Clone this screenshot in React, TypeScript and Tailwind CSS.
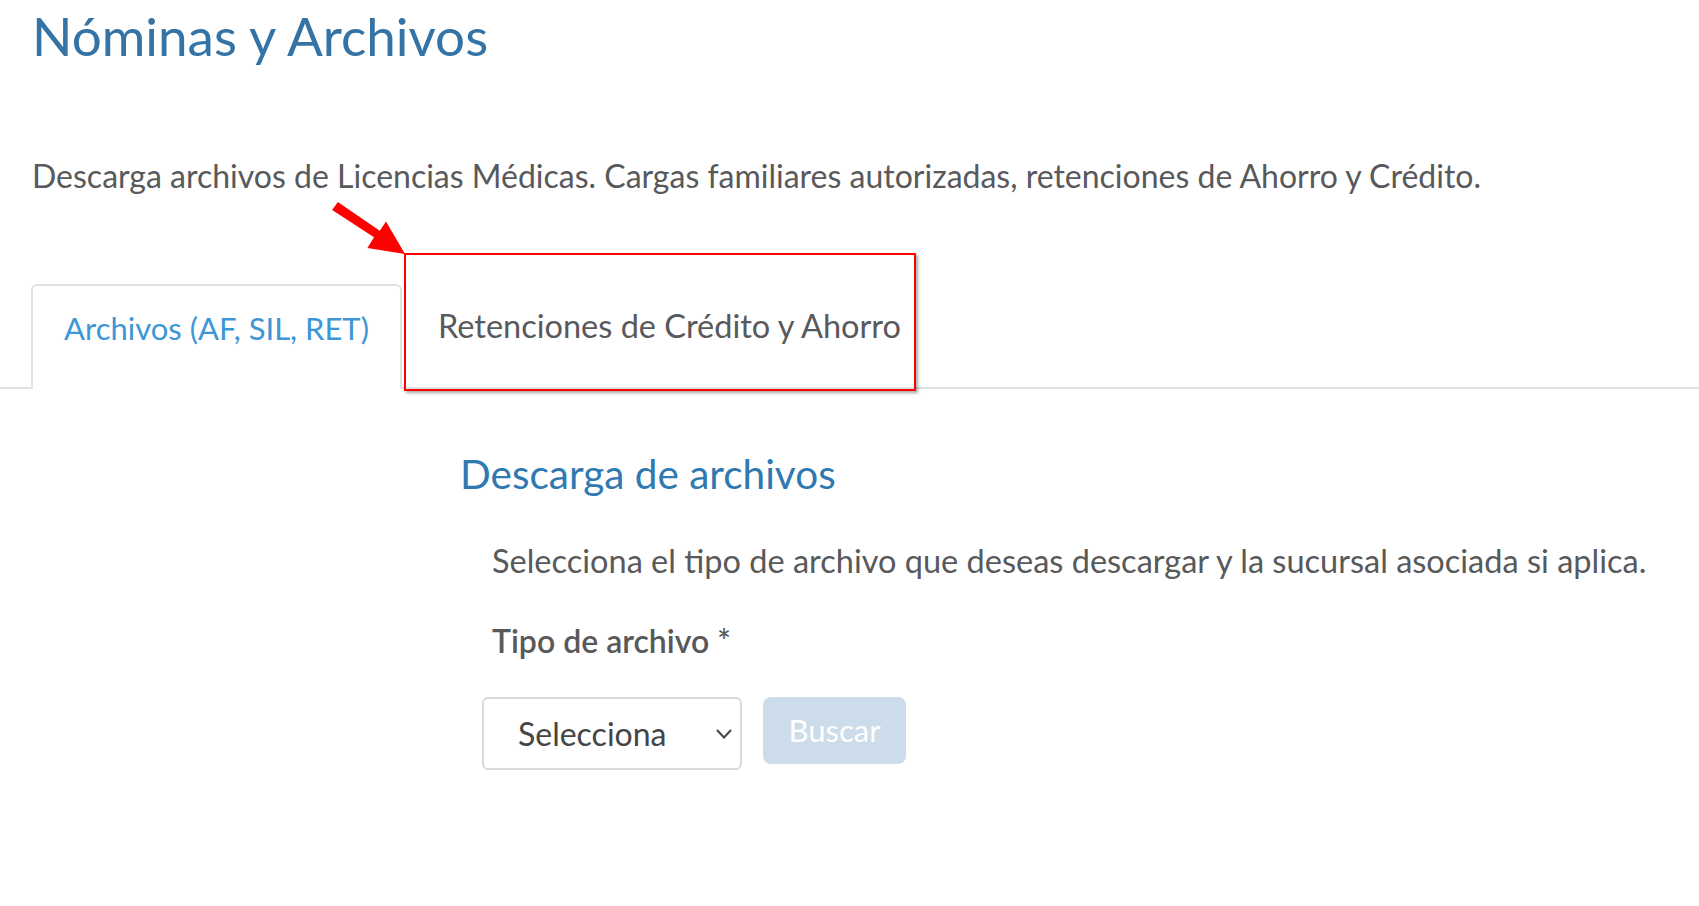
import React from "react";

export default function App() {
  const font = { fontFamily: "Lato, 'Noto Sans', sans-serif" };
  return (
    <div className="relative min-h-[906px] w-full bg-white text-[#58595b]" style={font}>
      <div className="pl-[32px] pt-[2px]">
        <h1 className="text-[53px] leading-[68px] text-[#3473a6]">Nóminas y Archivos</h1>
        <p className="mt-[86px] text-[32px] leading-[40px] text-[#58595b]">
          Descarga archivos de Licencias Médicas. Cargas familiares autorizadas, retenciones de Ahorro y Crédito.
        </p>
      </div>

      <div className="relative mt-[88px] flex items-end border-b-2 border-[#dee2e6] pl-[31px]">
        <div className="-mb-[2px] flex h-[105px] w-[371px] items-center justify-center rounded-t-[6px] border-2 border-b-0 border-[#dee2e6] bg-white pb-[18px] text-[31px] text-[#3d96d6]">
          Archivos (AF, SIL, RET)
        </div>
        <div className="flex h-[103px] items-center pb-[18px] pl-[36px] text-[32.5px] text-[#58595b]">
          Retenciones de Crédito y Ahorro
        </div>
        <div className="pointer-events-none absolute left-[404px] top-[-31px] h-[138px] w-[512px] border-2 border-[#ff0000] shadow-[2px_2px_3px_rgba(0,0,0,0.35)]" />
        <svg className="pointer-events-none absolute left-[330px] top-[-85px]" width="80" height="60" viewBox="0 0 80 60">
          <polygon points="7.8,2.9 49.8,31.7 56,22.6 75,55 37.4,49 44,38.3 2.2,11.1" fill="#ff0000" />
        </svg>
      </div>

      <div className="pl-[460px] pt-[60px]">
        <h2 className="text-[40.5px] leading-[50px] text-[#2f79b0]">Descarga de archivos</h2>
        <div className="pl-[32px]">
          <p className="mt-[42px] text-[32.5px] leading-[40px]">
            Selecciona el tipo de archivo que deseas descargar y la sucursal asociada si aplica.
          </p>
          <p className="mt-[40px] text-[32px] font-semibold leading-[40px]">Tipo de archivo *</p>
        </div>
        <div className="mt-[36px] flex items-start gap-[21px] pl-[22px]">
          <div className="relative flex h-[73px] w-[260px] items-center rounded-[6px] border-2 border-[#d6d9dd] bg-white pl-[34px] text-[32px] text-[#454545]">
            Selecciona
            <svg className="absolute right-[7px] top-[29px]" width="18" height="12" viewBox="0 0 18 12">
              <polyline points="2,2 9,9.5 16,2" fill="none" stroke="#454545" strokeWidth="2" />
            </svg>
          </div>
          <div className="flex h-[67px] w-[143px] items-center justify-center rounded-[8px] bg-[#cddceb] text-[31px] text-white">
            Buscar
          </div>
        </div>
      </div>
    </div>
  );
}
